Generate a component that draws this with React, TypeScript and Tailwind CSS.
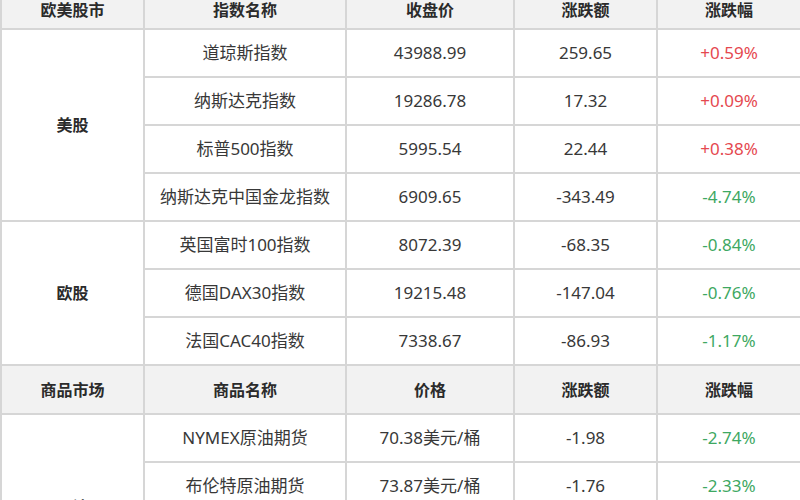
import React from "react";

type Row = { name: string; price: string; change: string; pct: string };

const usRows: Row[] = [
  { name: "道琼斯指数", price: "43988.99", change: "259.65", pct: "+0.59%" },
  { name: "纳斯达克指数", price: "19286.78", change: "17.32", pct: "+0.09%" },
  { name: "标普500指数", price: "5995.54", change: "22.44", pct: "+0.38%" },
  { name: "纳斯达克中国金龙指数", price: "6909.65", change: "-343.49", pct: "-4.74%" },
];

const euRows: Row[] = [
  { name: "英国富时100指数", price: "8072.39", change: "-68.35", pct: "-0.84%" },
  { name: "德国DAX30指数", price: "19215.48", change: "-147.04", pct: "-0.76%" },
  { name: "法国CAC40指数", price: "7338.67", change: "-86.93", pct: "-1.17%" },
];

const goodsRows: Row[] = [
  { name: "NYMEX原油期货", price: "70.38美元/桶", change: "-1.98", pct: "-2.74%" },
  { name: "布伦特原油期货", price: "73.87美元/桶", change: "-1.76", pct: "-2.33%" },
];

const cell = "border-2 border-[#d6d6d6] text-center align-middle p-0";

const HeadRow = ({ cols, h }: { cols: string[]; h: string }) => (
  <tr className={`bg-[#f2f2f2] ${h}`}>
    {cols.map((c) => (
      <th key={c} className={`${cell} font-bold text-[16px] text-[#2b2b2b]`}>
        {c}
      </th>
    ))}
  </tr>
);

const Group = ({
  label,
  rows,
  labelCls,
  labelInner,
}: {
  label: string;
  rows: Row[];
  labelCls?: string;
  labelInner?: string;
}) => (
  <>
    {rows.map((r, i) => (
      <tr key={r.name} className="h-[48px]">
        {i === 0 && (
          <td
            rowSpan={rows.length}
            className={`${cell} font-bold text-[16px] text-[#2b2b2b] ${labelCls ?? ""}`}
          >
            <span className={labelInner}>{label}</span>
          </td>
        )}
        <td className={cell}>{r.name}</td>
        <td className={cell}>{r.price}</td>
        <td className={cell}>{r.change}</td>
        <td className={`${cell} ${r.pct.startsWith("+") ? "text-[#e5484f]" : "text-[#3ea862]"}`}>
          {r.pct}
        </td>
      </tr>
    ))}
  </>
);

export default function App() {
  return (
    <div className="w-[800px] h-[500px] overflow-hidden bg-white font-['Noto_Sans','Noto_Sans_CJK_SC',sans-serif] text-[17px] text-[#383838]">
      <table className="w-[800px] -mt-[10px] border-collapse table-fixed">
        <colgroup>
          <col className="w-[143px]" />
          <col className="w-[202px]" />
          <col className="w-[168px]" />
          <col className="w-[143px]" />
          <col className="w-[144px]" />
        </colgroup>
        <tbody>
          <HeadRow h="h-[38px]" cols={["欧美股市", "指数名称", "收盘价", "涨跌额", "涨跌幅"]} />
          <Group label="美股" rows={usRows} />
          <Group label="欧股" rows={euRows} />
          <HeadRow h="h-[49px]" cols={["商品市场", "商品名称", "价格", "涨跌额", "涨跌幅"]} />
          <Group
            label="原油"
            rows={goodsRows}
            labelCls="!align-top !pt-[70px] leading-none"
            labelInner="relative top-[14px]"
          />
        </tbody>
      </table>
    </div>
  );
}
